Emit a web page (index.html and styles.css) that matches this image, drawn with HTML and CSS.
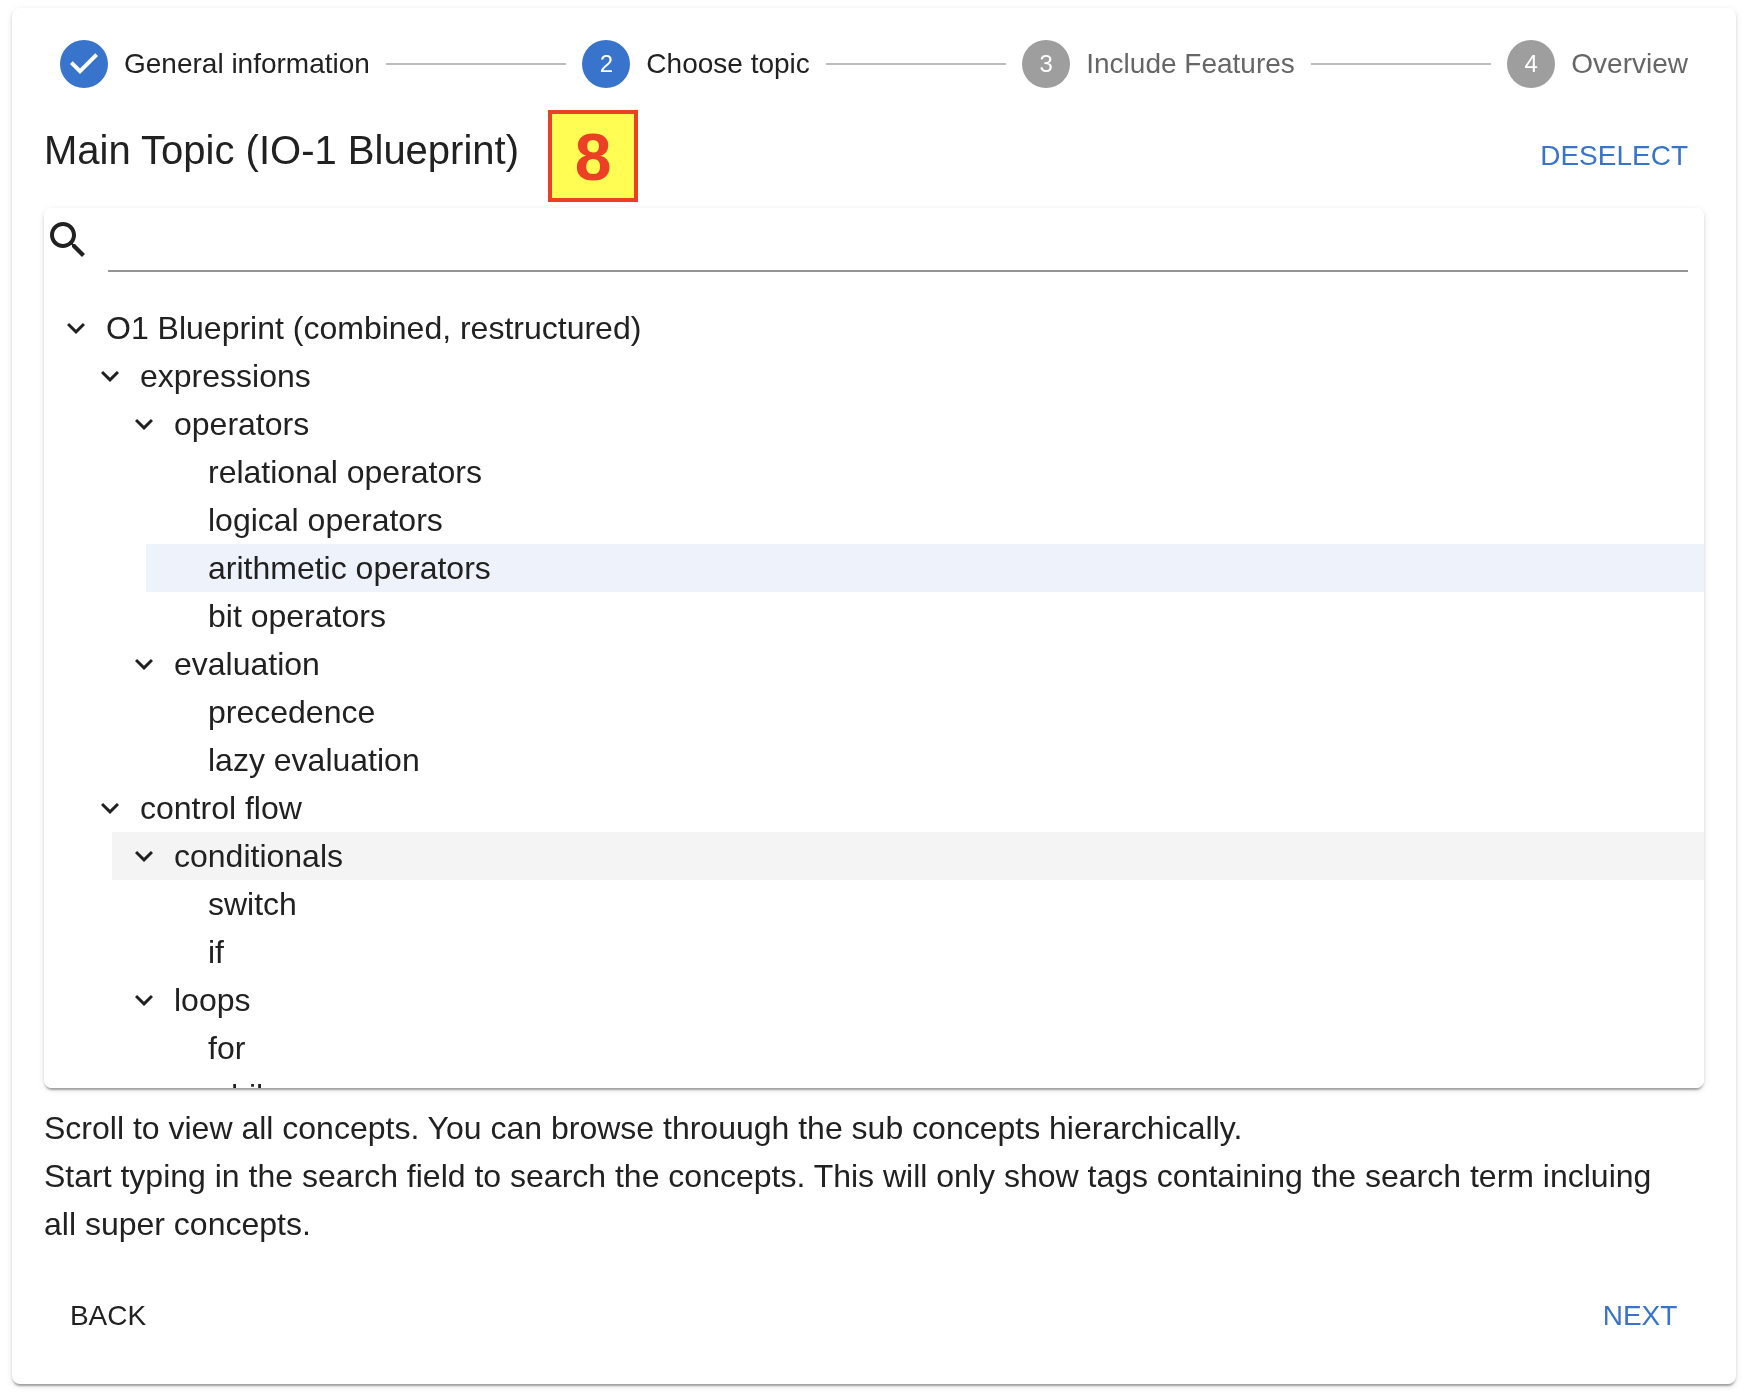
FILE: index.html
```html
<!DOCTYPE html>
<html lang="en">
<head>
<meta charset="utf-8">
<meta name="viewport" content="width=device-width, initial-scale=1">
<title>Choose topic</title>
<link rel="stylesheet" href="styles.css">
</head>
<body>
<svg class="sprite" aria-hidden="true">
  <symbol id="chevron" viewBox="0 0 24 24"><path d="M7.41 8.59L12 13.17l4.59-4.58L18 10l-6 6-6-6 1.41-1.41z"/></symbol>
</svg>
<main class="paper wizard">
  <ol class="stepper">
    <li class="step">
      <svg class="step-icon" viewBox="0 0 24 24" aria-hidden="true"><path d="M12 0a12 12 0 1 0 0 24 12 12 0 0 0 0-24zm-2 17l-5-5 1.4-1.4 3.6 3.6 7.6-7.6L19 8l-9 9z"/></svg>
      <span>General information</span>
    </li>
    <li class="connector" aria-hidden="true"></li>
    <li class="step" aria-current="step"><span class="step-number">2</span><span>Choose topic</span></li>
    <li class="connector" aria-hidden="true"></li>
    <li class="step pending"><span class="step-number">3</span><span>Include Features</span></li>
    <li class="connector" aria-hidden="true"></li>
    <li class="step pending"><span class="step-number">4</span><span>Overview</span></li>
  </ol>

  <header class="topic-header">
    <h1 class="title">Main Topic (IO-1 Blueprint)</h1>
    <span class="marker">8</span>
    <button class="button primary" type="button">DESELECT</button>
  </header>

  <section class="paper browser">
    <div class="search">
      <label for="concept-search" aria-label="Search concepts">
        <svg class="search-icon" viewBox="0 0 24 24" aria-hidden="true"><path d="M15.5 14h-.79l-.28-.27C15.41 12.59 16 11.11 16 9.5 16 5.91 13.09 3 9.5 3S3 5.91 3 9.5 5.91 16 9.5 16c1.61 0 3.09-.59 4.23-1.57l.27.28v.79l5 4.99L20.49 19l-4.99-5zm-6 0C7.01 14 5 11.99 5 9.5S7.01 5 9.5 5 14 7.01 14 9.5 11.99 14 9.5 14z"/></svg>
      </label>
      <input class="search-input" id="concept-search" type="text">
    </div>
    <ul class="tree">
      <li><button class="node" type="button"><svg class="chevron"><use href="#chevron"/></svg>O1 Blueprint (combined, restructured)</button>
        <ul>
          <li><button class="node" type="button"><svg class="chevron"><use href="#chevron"/></svg>expressions</button>
            <ul>
              <li><button class="node" type="button"><svg class="chevron"><use href="#chevron"/></svg>operators</button>
                <ul>
                  <li><button class="node leaf" type="button">relational operators</button></li>
                  <li><button class="node leaf" type="button">logical operators</button></li>
                  <li><button class="node leaf selected" type="button">arithmetic operators</button></li>
                  <li><button class="node leaf" type="button">bit operators</button></li>
                </ul>
              </li>
              <li><button class="node" type="button"><svg class="chevron"><use href="#chevron"/></svg>evaluation</button>
                <ul>
                  <li><button class="node leaf" type="button">precedence</button></li>
                  <li><button class="node leaf" type="button">lazy evaluation</button></li>
                </ul>
              </li>
            </ul>
          </li>
          <li><button class="node" type="button"><svg class="chevron"><use href="#chevron"/></svg>control flow</button>
            <ul>
              <li><button class="node hovered" type="button"><svg class="chevron"><use href="#chevron"/></svg>conditionals</button>
                <ul>
                  <li><button class="node leaf" type="button">switch</button></li>
                  <li><button class="node leaf" type="button">if</button></li>
                </ul>
              </li>
              <li><button class="node" type="button"><svg class="chevron"><use href="#chevron"/></svg>loops</button>
                <ul>
                  <li><button class="node leaf" type="button">for</button></li>
                  <li><button class="node leaf" type="button">while</button></li>
                </ul>
              </li>
            </ul>
          </li>
        </ul>
      </li>
    </ul>
  </section>

  <p class="help">Scroll to view all concepts. You can browse throuugh the sub concepts hierarchically.<br>
  Start typing in the search field to search the concepts. This will only show tags containing the search term incluing all super concepts.</p>

  <footer class="actions">
    <button class="button" type="button">BACK</button>
    <button class="button primary" type="button">NEXT</button>
  </footer>
</main>
</body>
</html>
```
FILE: styles.css
```css
:root {
  --primary: #3874cb;
  --text: #212121;
  --muted: #666;
}

* {
  box-sizing: border-box;
}

body {
  margin: 0;
  padding: 8px 10px 8px 12px;
  background: #fff;
  color: var(--text);
  font-family: "Liberation Sans", Arial, sans-serif;
  font-size: 32px;
  line-height: 48px;
}

button,
input {
  font: inherit;
  color: inherit;
  background: none;
  border: 0;
}

ul,
ol {
  margin: 0;
  padding: 0;
  list-style: none;
}

.sprite {
  position: absolute;
  width: 0;
  height: 0;
}

.paper {
  background: #fff;
  border-radius: 8px;
  box-shadow:
    0 4px 2px -2px rgba(0, 0, 0, 0.2),
    0 2px 2px 0 rgba(0, 0, 0, 0.14),
    0 2px 6px 0 rgba(0, 0, 0, 0.12);
}

.wizard {
  padding: 32px;
}

.stepper {
  display: flex;
  align-items: center;
  gap: 16px;
  padding: 0 16px;
  font-size: 28px;
}

.step {
  display: flex;
  align-items: center;
  gap: 16px;
  white-space: nowrap;
}

.step-icon,
.step-number {
  flex: none;
  width: 48px;
  height: 48px;
}

.step-icon {
  fill: var(--primary);
}

.step-number {
  border-radius: 50%;
  background: var(--primary);
  color: #fff;
  font-size: 24px;
  text-align: center;
}

.pending {
  color: var(--muted);
}

.pending .step-number {
  background: #9e9e9e;
}

.connector {
  flex: 1;
  height: 2px;
  background: #bdbdbd;
}

.topic-header {
  position: relative;
  display: flex;
  justify-content: space-between;
  margin: 32px 0 16px;
}

.title {
  margin: 0;
  font-size: 40px;
  font-weight: 400;
  line-height: 60px;
}

.marker {
  position: absolute;
  top: -10px;
  left: 504px;
  width: 90px;
  height: 92px;
  border: 4px solid #eb4025;
  background: #fffc54;
  color: #eb4025;
  font-size: 66px;
  font-weight: 700;
  line-height: 86px;
  text-align: center;
}

.button {
  min-width: 128px;
  padding: 12px 16px;
  border-radius: 8px;
  font-size: 28px;
}

.primary {
  color: var(--primary);
}

.browser {
  height: 880px;
  overflow: auto;
  scrollbar-width: none;
}

.search {
  display: flex;
  gap: 16px;
  padding: 8px 16px 32px 0;
}

.search-icon {
  display: block;
  width: 48px;
  height: 48px;
  fill: var(--text);
}

.search-input {
  flex: 1;
  min-width: 0;
  height: 56px;
  padding: 0;
  border-bottom: 2px solid #949494;
  outline: 0;
}

.tree {
  white-space: nowrap;
}

.tree ul {
  padding-left: 34px;
}

.node {
  display: flex;
  align-items: center;
  gap: 12px;
  width: 100%;
  padding: 0 0 0 14px;
  text-align: left;
}

/* Leaves have no chevron, so their text is indented past its column. */
.leaf {
  padding-left: 62px;
}

.selected {
  background: #eef3fb;
}

.hovered {
  background: #f4f4f4;
}

.chevron {
  flex: none;
  width: 36px;
  height: 36px;
  fill: var(--text);
}

.help {
  margin: 16px 0 32px;
  padding-right: 16px;
}

.actions {
  display: flex;
  justify-content: space-between;
}
```
